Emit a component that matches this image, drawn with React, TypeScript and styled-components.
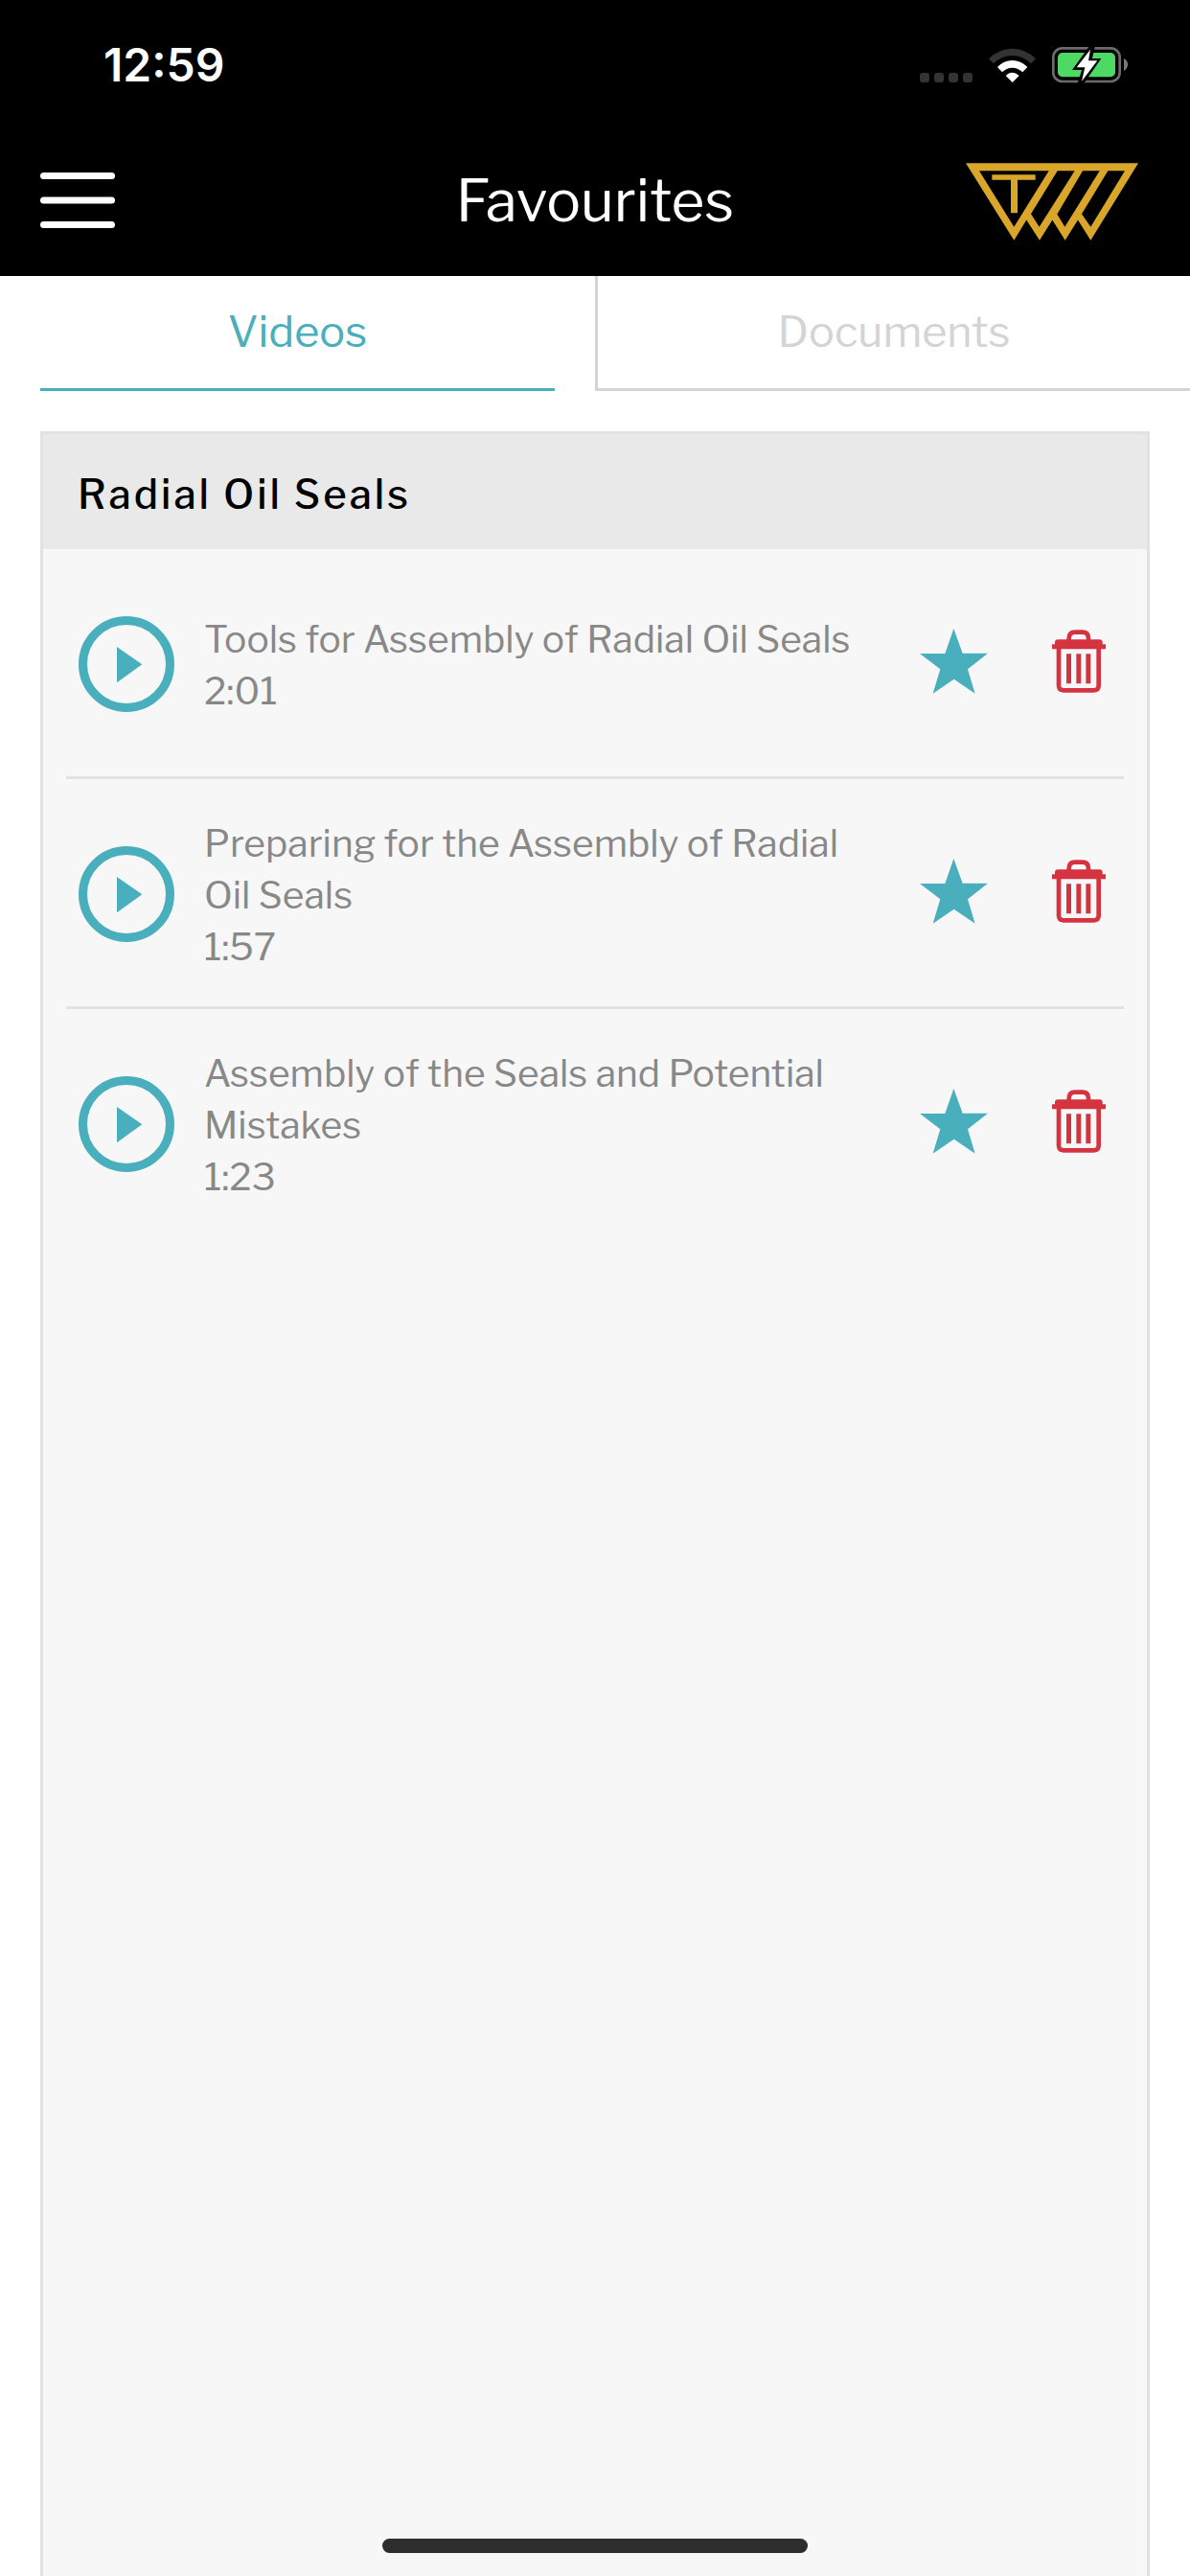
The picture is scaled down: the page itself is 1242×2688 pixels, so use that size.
import React from "react";
import styled, { createGlobalStyle } from "styled-components";

const teal = "#4aafbc";
const red = "#d63341";
const line = "#e2e2e2";

const GlobalStyle = createGlobalStyle`
  *, *::before, *::after { box-sizing: border-box; }
  body {
    margin: 0;
    background: #fff;
    font-family: "Libre Franklin", Inter, "Liberation Sans", sans-serif;
    font-weight: 400;
  }
  h1, h2, p, ul { margin: 0; padding: 0; }
  button {
    margin: 0;
    padding: 0;
    border: 0;
    background: none;
    font: inherit;
    color: inherit;
    cursor: pointer;
  }
  svg { display: block; }
`;

const Screen = styled.div`
  min-height: 100vh;
  display: flex;
  flex-direction: column;
`;

const Top = styled.header`
  background: #000;
  color: #fff;
`;

const StatusBar = styled.div`
  height: 132px;
  padding: 4px 64px 0 108px;
  display: flex;
  align-items: center;
  justify-content: space-between;
`;

const Clock = styled.time`
  font-family: Inter, sans-serif;
  font-size: 48px;
  line-height: 56px;
  font-weight: 600;
`;

const StatusIcons = styled.div`
  display: flex;
  align-items: center;
  gap: 17px;
`;

const NavBar = styled.div`
  height: 156px;
  padding: 0 42px 2px;
  display: grid;
  grid-template-columns: 1fr auto 1fr;
  align-items: center;
`;

const MenuButton = styled.button`
  width: 78px;
`;

const Title = styled.h1`
  padding-top: 2px;
  font-size: 60px;
  line-height: 72px;
  font-weight: 400;
  text-align: center;
`;

const LogoBox = styled.div`
  display: flex;
  justify-content: flex-end;
  padding: 2px 12px 0 0;
`;

const Tabs = styled.div`
  display: grid;
  grid-template-columns: 1fr 1fr;
  height: 120px;
`;

const Tab = styled.button<{ $active?: boolean }>`
  margin: ${(p) => (p.$active ? "0 42px" : "0")};
  padding-bottom: 2px;
  border-bottom: 3px solid ${(p) => (p.$active ? teal : "#d4d4d4")};
  border-left: ${(p) => (p.$active ? "0" : "3px solid #d4d4d4")};
  color: ${(p) => (p.$active ? teal : "#d4d4d4")};
  font-size: 45px;
  line-height: 54px;
`;

const Panel = styled.section`
  flex: 1;
  margin: 42px 42px 0;
  border: 3px solid ${line};
  border-bottom: 0;
  background: #f7f7f7;
`;

const PanelHeading = styled.h2`
  height: 120px;
  padding: 6px 36px 0;
  display: flex;
  align-items: center;
  background: #e9e9e9;
  color: #000;
  font-size: 42px;
  line-height: 54px;
  font-weight: 500;
  letter-spacing: 3px;
`;

const List = styled.ul`
  list-style: none;
  padding: 0 24px;
`;

const Row = styled.li`
  min-height: 240px;
  padding: 0 19px 0 13px;
  display: flex;
  align-items: center;
  border-top: 3px solid transparent;
  border-bottom: 3px solid ${line};
  &:last-child { border-bottom-color: transparent; }
`;

const RowText = styled.div`
  flex: 1;
  margin: 0 60px 0 31px;
  padding-top: 2px;
  color: #888;
  font-size: 39px;
  line-height: 54px;
`;

const Actions = styled.div`
  display: flex;
  align-items: center;
  gap: 67px;
  padding-bottom: 6px;
`;

const HomeIndicator = styled.div`
  position: fixed;
  left: 50%;
  bottom: 24px;
  width: 444px;
  height: 15px;
  margin-left: -222px;
  border-radius: 8px;
  background: #2d2d2d;
`;

const SignalIcon = () => (
  <svg width="55" height="36" viewBox="0 0 55 36" fill="#333" aria-hidden="true">
    {[0, 15, 30, 45].map((x) => (
      <rect key={x} x={x} y="26" width="10" height="10" rx="3" />
    ))}
  </svg>
);

const WifiIcon = () => (
  <svg width="49" height="36" viewBox="0 0 147 108" aria-hidden="true">
    <path d="M0 34 Q32 2 73.500 2 Q115 2 147 34 L132 49 Q106 24 73.500 24 Q41 24 15 49Z" fill="#333" />
    <path d="M27 60 Q47 39 73.500 39 Q100 39 121 60 L106 76 Q92 62 73.500 62 Q55 62 42 76Z" fill="#fff" />
    <path d="M53 87 Q62 77 73.500 77 Q85 77 95 87 L74 108Z" fill="#fff" />
  </svg>
);

const BatteryIcon = () => (
  <svg width="80" height="38" viewBox="0 0 240 114" aria-hidden="true">
    <rect x="4" y="4" width="208" height="104" rx="28" fill="none" stroke="#6b6b6b" strokeWidth="8" />
    <rect x="18" y="18" width="180" height="76" rx="15" fill="#4cd964" />
    <path d="M225 36 Q237 42 237 55 Q237 68 225 75Z" fill="#7a7a7a" />
    <path d="M115 0 L63 72 L93 72 L80 114 L100 114 L154 36 L126 36 L134 0Z" fill="#000" />
    <path d="M120 8 L77 64 L103 64 L93 107 L142 43 L114 43Z" fill="#fff" />
  </svg>
);

const MenuIcon = () => (
  <svg width="78" height="58" viewBox="0 0 78 58" fill="#fff" aria-hidden="true">
    <rect y="0" width="78" height="7" rx="3.500" />
    <rect y="25.500" width="78" height="7" rx="3.500" />
    <rect y="51" width="78" height="7" rx="3.500" />
  </svg>
);

const Logo = () => (
  <svg width="180" height="81" viewBox="54 60 540 242" fill="#d9a62a" role="img" aria-label="TWW">
    <path
      fillRule="evenodd"
      d="M54 60H594L445 302 405 238 365 302 325 238 285 302 244 238 205 302Z
         M96 84H314L205 260Z
         M341 84H395L284 260 258 219Z
         M420 84H473L364 260 340 220Z
         M499 84H552L445 260 417 219Z"
    />
    <path d="M136 96H272V113H216V216H195V113H136Z" />
  </svg>
);

const PlayIcon = () => (
  <svg width="100" height="100" viewBox="0 0 300 300" aria-hidden="true">
    <circle cx="150" cy="150" r="136.500" fill="none" stroke={teal} strokeWidth="27" />
    <path d="M120 96 L199 151 L120 208Z" fill={teal} />
  </svg>
);

const StarIcon = () => (
  <svg width="71" height="68" viewBox="0 0 213 204" fill={teal} aria-hidden="true">
    <path d="M106 0 L134 77 H213 L150 127 L173 203 L107 158 L41 203 L64 127 L0 78 H79Z" />
  </svg>
);

const TrashIcon = () => (
  <svg width="56" height="66" viewBox="0 0 168 198" aria-hidden="true">
    <path d="M53 34 V28 Q53 8 72 8 H95 Q114 8 114 28 V34" fill="none" stroke={red} strokeWidth="14" />
    <path d="M0 46 H9 V40 Q9 31 18 31 H149 Q158 31 158 40 V46 H168 V61 H0Z" fill={red} />
    <path d="M21 60 V175 Q21 190 36 190 H131 Q146 190 146 175 V60" fill="none" stroke={red} strokeWidth="14" />
    <path d="M45 76h15v93h-15z M76 76h15v93h-15z M106 76h15v93h-15z" fill={red} />
  </svg>
);

const videos = [
  { title: "Tools for Assembly of Radial Oil Seals", length: "2:01" },
  { title: "Preparing for the Assembly of Radial Oil Seals", length: "1:57" },
  { title: "Assembly of the Seals and Potential Mistakes", length: "1:23" },
];

export default function App() {
  return (
    <Screen>
      <GlobalStyle />
      <Top>
        <StatusBar>
          <Clock>12:59</Clock>
          <StatusIcons>
            <SignalIcon />
            <WifiIcon />
            <BatteryIcon />
          </StatusIcons>
        </StatusBar>
        <NavBar>
          <MenuButton type="button" aria-label="Menu">
            <MenuIcon />
          </MenuButton>
          <Title>Favourites</Title>
          <LogoBox>
            <Logo />
          </LogoBox>
        </NavBar>
      </Top>
      <Tabs role="tablist">
        <Tab type="button" role="tab" aria-selected="true" $active>
          Videos
        </Tab>
        <Tab type="button" role="tab" aria-selected="false">
          Documents
        </Tab>
      </Tabs>
      <Panel>
        <PanelHeading>Radial Oil Seals</PanelHeading>
        <List>
          {videos.map((video) => (
            <Row key={video.title}>
              <button type="button" aria-label={`Play ${video.title}`}>
                <PlayIcon />
              </button>
              <RowText>
                <p>{video.title}</p>
                <p>{video.length}</p>
              </RowText>
              <Actions>
                <button type="button" aria-label={`Favourite ${video.title}`}>
                  <StarIcon />
                </button>
                <button type="button" aria-label={`Delete ${video.title}`}>
                  <TrashIcon />
                </button>
              </Actions>
            </Row>
          ))}
        </List>
      </Panel>
      <HomeIndicator />
    </Screen>
  );
}
